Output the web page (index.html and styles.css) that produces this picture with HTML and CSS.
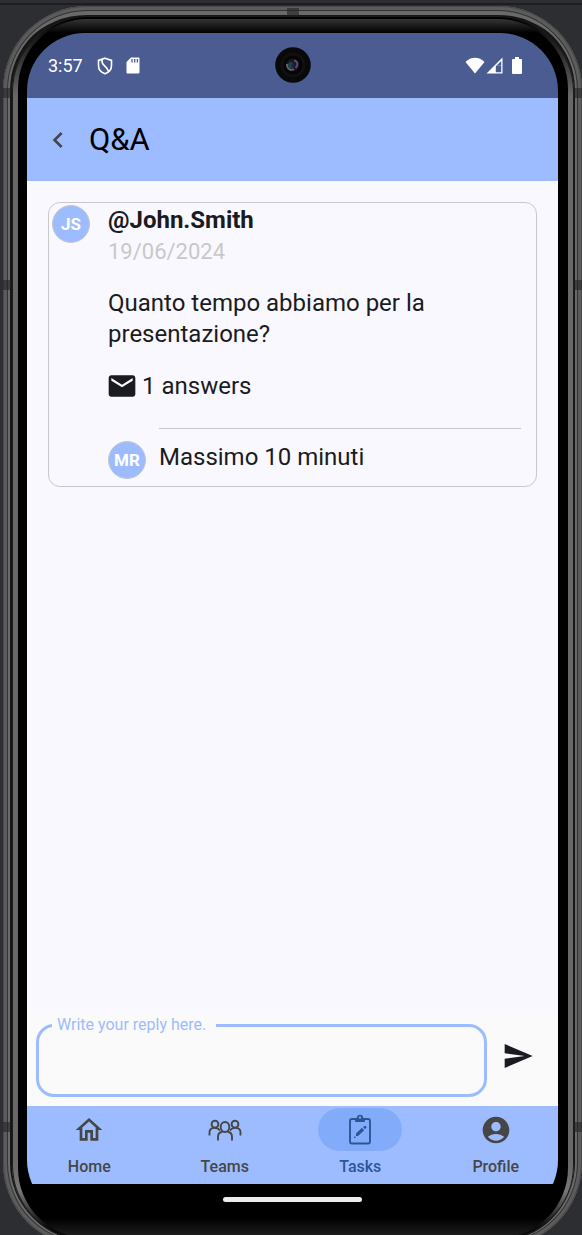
FILE: index.html
```html
<!DOCTYPE html>
<html lang="it">
<head>
<meta charset="utf-8">
<meta name="viewport" content="width=device-width, initial-scale=1">
<title>Q&amp;A</title>
<link rel="stylesheet" href="styles.css">
</head>
<body>
<div class="shell">
  <span class="seam seam-top"></span>
  <span class="seam seam-left seam-a"></span>
  <span class="seam seam-left seam-b"></span>
  <span class="seam seam-left seam-c"></span>
  <span class="seam seam-right seam-a"></span>
  <span class="seam seam-right seam-b"></span>
  <span class="seam seam-right seam-c"></span>
  <div class="rim">
    <div class="glass">
      <div class="screen">
        <div class="status">
          <span class="clock">3:57</span>
          <svg class="shield" width="16" height="18" viewBox="0 0 16 18" fill="none" stroke="#fff" stroke-width="1.600"><path d="M8 1.200 14.500 3.400V8.500C14.500 12.500 11.500 15.600 8 16.800 4.500 15.600 1.500 12.500 1.500 8.500V3.400Z"/><path d="M5 2.500C4 9 9.500 8 11.500 14.500"/></svg>
          <svg class="sdcard" width="14" height="17" viewBox="0 0 14 17"><path fill="#fff" d="M5 0.500H12.500Q13.500 .5 13.500 1.500V15.500Q13.500 16.500 12.500 16.500H1.500Q.5 16.500 .5 15.500V5Z"/><path stroke="#4a5c92" stroke-width="1.300" d="M6 2v3.500M8.700 2v3.500M11.400 2v3.500"/></svg>
          <span class="grow"></span>
          <svg width="20" height="17" viewBox="0 0 20 17"><path fill="#fff" d="M.5 5C5.500-.7 14.500-.7 19.500 5L10 16.500Z"/></svg>
          <svg class="signal" width="17" height="17" viewBox="0 0 17 17"><path fill="#fff" d="M16.500.5V16.500H.5Z"/><path fill="#4a5c92" d="M15.200 4V8.500H10.700ZM9.800 10H15.200V15.200H9.800Z"/><path fill="#4a5c92" d="M10.700 8.500H15.200V10H9.800V9.400Z"/></svg>
          <svg width="10" height="17" viewBox="0 0 10 17"><path fill="#fff" d="M3 0h4v2h2q1 0 1 1v13q0 1-1 1H1q-1 0-1-1V3q0-1 1-1h2z"/></svg>
          <svg class="camera" width="36" height="36" viewBox="0 0 36 36"><circle cx="18" cy="18" r="17.800" fill="#090909"/><circle cx="18" cy="18" r="12.500" fill="#101011"/><circle cx="18" cy="18" r="9.500" fill="#050505"/><circle cx="17.500" cy="18" r="6.500" fill="#18181e"/><path d="M12 17C12 22 16 24 19 22" fill="none" stroke="#66615f" stroke-width="2"/><circle cx="16" cy="18" r="3" fill="#1c4354"/><path d="M19 13.500C23 14 23.500 18 20.500 21" fill="none" stroke="#67446f" stroke-width="2"/><circle cx="18.500" cy="18" r="2" fill="#18203c"/></svg>
        </div>
        <header class="header">
          <button class="back" type="button" aria-label="Indietro"><svg width="32" height="32" viewBox="0 0 24 24"><path fill="#464646" d="M15.410 16.590 10.830 12l4.580-4.590L14 6l-6 6 6 6z"/></svg></button>
          <h1>Q&amp;A</h1>
        </header>
        <main class="content">
          <article class="card">
            <span class="avatar">JS</span>
            <div class="post">
              <h2>@John.Smith</h2>
              <time datetime="2024-06-19">19/06/2024</time>
              <p class="question">Quanto tempo abbiamo per la presentazione?</p>
              <p class="answers"><svg width="32" height="32" viewBox="0 0 24 24"><path fill="#1a1b21" d="M20 4H4c-1.100 0-1.990.9-1.990 2L2 18c0 1.100.9 2 2 2h16c1.100 0 2-.9 2-2V6c0-1.100-.9-2-2-2zm0 4-8 5-8-5V6l8 5 8-5v2z"/></svg><span>1 answers</span></p>
              <div class="reply">
                <span class="avatar">MR</span>
                <p>Massimo 10 minuti</p>
              </div>
            </div>
          </article>
        </main>
        <form class="composer">
          <fieldset class="field">
            <legend><label for="reply">Write your reply here.</label></legend>
            <input id="reply" type="text">
          </fieldset>
          <button class="send" type="button" aria-label="Send"><svg width="32" height="32" viewBox="0 0 24 24"><path fill="#1a1b21" d="M2.010 21 23 12 2.010 3 2 10l15 2-15 2z"/></svg></button>
        </form>
        <nav class="tabs">
          <a href="#home"><span class="pill"><svg width="32" height="32" viewBox="0 0 24 24"><path fill="#464646" d="m12 5.690 5 4.500V18h-2v-6H9v6H7v-7.810l5-4.500M12 3 2 12h3v8h6v-6h2v6h6v-8h3L12 3z"/></svg></span>Home</a>
          <a href="#teams"><span class="pill"><svg width="34" height="24" viewBox="0 0 34 24" fill="none" stroke="#464646" stroke-width="1.900"><circle cx="7" cy="6.200" r="3.400"/><circle cx="27" cy="6.200" r="3.400"/><ellipse cx="17" cy="9" rx="4.300" ry="5"/><path d="M1.500 17.500V14.500C1.500 11.500 3 9.900 6.500 9.900 9.500 9.900 11 11 12 12.500M32.500 17.500V14.500C32.500 11.500 31 9.900 27.500 9.900 24.500 9.900 23 11 22 12.500M10 22.500V19C10 15.500 12 14 14.500 14M24 22.500V19C24 15.500 22 14 19.500 14"/></svg></span>Teams</a>
          <a href="#tasks" class="active" aria-current="page"><span class="pill"><svg width="24" height="32" viewBox="0 0 24 32"><g fill="none" stroke="#2c5797" stroke-width="1.900"><rect x="2" y="5" width="20" height="24.500" rx="2"/><circle cx="12" cy="3.800" r="2.200"/></g><path fill="#2c5797" d="M7 5.500 9.500 4H14.500L17 5.500V7Q17 8 16 8H8Q7 8 7 7ZM8 19.500 14 13.800 16.200 16.200 10 22H8ZM15 13 17.200 11.700Q18.500 12 18.500 13.500L17 15.300ZM6 22.500h1.500V24H6z"/><circle cx="12" cy="3.800" r="1" fill="#82acfa"/></svg></span>Tasks</a>
          <a href="#profile"><span class="pill"><svg width="32" height="32" viewBox="0 0 24 24"><path fill="#464646" d="M12 2C6.480 2 2 6.480 2 12s4.480 10 10 10 10-4.480 10-10S17.520 2 12 2zm0 4c1.930 0 3.500 1.570 3.500 3.500S13.930 13 12 13s-3.500-1.570-3.500-3.500S10.070 6 12 6zm0 14c-2.030 0-4.430-.820-6.140-2.880C7.550 15.800 9.680 15 12 15s4.450.8 6.140 2.120C16.430 19.180 14.030 20 12 20z"/></svg></span>Profile</a>
        </nav>
        <div class="gesture"><span></span></div>
      </div>
    </div>
  </div>
</div>
</body>
</html>
```

FILE: styles.css
```css
* { box-sizing: border-box; }
html { height: 100%; }
body {
  margin: 0;
  height: 100%;
  min-height: 700px;
  padding: 6px 0 0 3px;
  overflow: hidden;
  background: linear-gradient(#2d2e32 3px, #1d1e21 3px, #1d1e21 5px, #2d2e32 5px);
  font-family: Roboto, "Liberation Sans", sans-serif;
  color: #1a1b21;
}
h1, h2, p { margin: 0; font-weight: 400; }
svg { display: block; flex: none; }
button { border: 0; padding: 0; background: none; cursor: pointer; }

/* Device body */
.shell {
  position: relative;
  display: flex;
  height: calc(100% + 12px);
  padding: 10px 8px 6px 9px;
  border-radius: 84px;
  background: #161616;
  box-shadow: inset 0 0 0 1px #4a4a4a, inset 0 0 0 4px #5c5c5c, inset 0 0 0 5px #333, inset 0 0 0 7px #6a6a6a, inset 0 9px 0 0 #6a6a6a;
}
.rim {
  flex: 1;
  display: flex;
  min-width: 0;
  padding: 3px 6px;
  border-radius: 76px;
  background: linear-gradient(#000 0, #222 30px, #686868 80px, #686868 calc(100% - 80px), #777 calc(100% - 50px), #0a0a0a calc(100% - 14px));
  box-shadow: inset 0 0 0 1px #1c1c1c;
}
.glass {
  flex: 1;
  display: flex;
  min-width: 0;
  padding: 14px 10px 20px 9px;
  border-radius: 70px;
  background: linear-gradient(#353535, #000 14px, #000 calc(100% - 20px), #222);
}
.seam { position: absolute; background: rgba(35, 35, 35, 0.6); }
.seam-top { top: 2px; left: 50%; width: 12px; height: 8px; margin-left: -6px; }
.seam-left, .seam-right { width: 8px; height: 10px; }
.seam-left { left: 0; }
.seam-right { right: 0; }
.seam-a { top: 82px; }
.seam-b { top: 274px; }
.seam-c { bottom: 115px; }

/* Screen */
.screen {
  flex: 1;
  min-width: 0;
  display: flex;
  flex-direction: column;
  overflow: hidden;
  border-radius: 58px;
  background: #000;
}
.status {
  position: relative;
  display: flex;
  align-items: center;
  flex: none;
  height: 65px;
  padding: 0 36px 0 21px;
  background: #4a5c92;
  color: #fff;
}
.clock { font-size: 18px; }
.shield { margin-left: 14px; }
.sdcard { margin-left: 13px; }
.grow { flex: 1; }
.signal { margin: 0 9px 0 1px; }
.camera { position: absolute; top: 14px; left: 50%; margin-left: -18px; }
.header {
  display: flex;
  align-items: center;
  gap: 15px;
  flex: none;
  height: 83px;
  padding-left: 15px;
  background: #9dbcff;
}
.header h1 { font-size: 31px; line-height: 40px; color: #000; }

/* Question */
.content { flex: 1; padding: 21px; background: #f9f8ff; }
.card {
  display: flex;
  gap: 18px;
  padding: 2px 15px 7px 3px;
  border: 1px solid #c8c8c8;
  border-radius: 12px;
  font-size: 24px;
  line-height: 31px;
}
.avatar {
  flex: none;
  display: flex;
  align-items: center;
  justify-content: center;
  width: 38px;
  height: 38px;
  border: 1px solid #c4c6cc;
  border-radius: 50%;
  background: #9dbcff;
  color: #fff;
  font-size: 17px;
  font-weight: 700;
}
.post { flex: 1; min-width: 0; }
.post h2 { font-size: 24px; line-height: 31px; font-weight: 700; }
.post time { display: block; color: #c8c8c8; font-size: 22px; }
.question { margin-top: 21px; }
.answers { display: flex; align-items: center; gap: 4px; margin: 20px 0 26px -2px; }
.reply { display: flex; gap: 13px; }
.reply .avatar { margin-top: 13px; }
.reply p { flex: 1; padding-top: 13px; border-top: 1px solid #c8c8cc; }

/* Composer */
.composer {
  display: flex;
  gap: 15px;
  flex: none;
  padding: 0 24px 9px 9px;
  background: #fafafa;
}
.field {
  flex: 1;
  min-width: 0;
  margin: 0;
  padding: 0 13px;
  border: 3px solid #9dbcff;
  border-radius: 18px;
}
.field legend { padding: 0 10px 0 5px; color: #9dbcff; font-size: 16px; line-height: 22px; }
.field input {
  display: block;
  width: 100%;
  height: 58px;
  padding: 0;
  border: 0;
  outline: 0;
  background: none;
  font: 24px Roboto, sans-serif;
}
.send { align-self: center; }

/* Bottom navigation */
.tabs {
  display: flex;
  gap: 11px;
  flex: none;
  height: 78px;
  padding-top: 2px;
  background: #9dbcff;
}
.tabs a {
  flex: 1;
  display: flex;
  flex-direction: column;
  align-items: center;
  gap: 6px;
  color: #464646;
  font-size: 16px;
  font-weight: 500;
  line-height: 20px;
  text-decoration: none;
}
.pill {
  display: flex;
  align-items: center;
  justify-content: center;
  width: 84px;
  height: 43px;
  border-radius: 22px;
}
.tabs .active { color: #2c5797; }
.active .pill { background: #82acfa; }
.gesture {
  display: flex;
  justify-content: center;
  flex: none;
  height: 34px;
  padding-top: 13px;
  background: #000;
}
.gesture span { width: 139px; height: 5px; border-radius: 3px; background: #ececec; }
```
